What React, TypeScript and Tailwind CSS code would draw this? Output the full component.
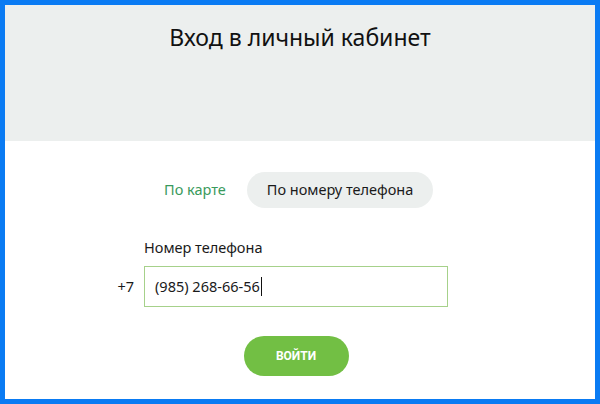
import React from 'react';

const font = { fontFamily: '"Noto Sans", "Open Sans", sans-serif' };

export default function App() {
  return (
    <div
      className="w-[600px] h-[404px] border-[5px] border-[#0a7bf3] bg-white flex flex-col text-[#1a1a1a]"
      style={font}
    >
      <div className="h-[136px] bg-[#ecefee] pt-[17px] flex justify-center">
        <h1 className="text-[23px] leading-[30px] font-normal text-[#111]">Вход в личный кабинет</h1>
      </div>

      <div className="flex-1 ml-[139px] w-[304px] flex flex-col pt-[31px]">
        <div className="flex items-center gap-[1px]">
          <button className="h-[36px] px-[20px] rounded-full text-[14.5px] text-[#3a9a5c]">По карте</button>
          <button className="h-[36px] px-[20px] rounded-full text-[14.5px] bg-[#ecefee] text-[#1a1a1a]">
            По номеру телефона
          </button>
        </div>

        <label className="mt-[29px] mb-[9px] text-[14.5px] leading-[20px] text-[#1a1a1a]">Номер телефона</label>

        <div className="relative">
          <span className="absolute right-full mr-[10px] top-0 h-[41px] flex items-center text-[14.5px] text-[#1a1a1a]">
            +7
          </span>
          <div className="h-[41px] border border-[#a6d18a] flex items-center pl-[10px] text-[14.5px] text-[#1a1a1a]">
            (985) 268-66-56
            <span className="inline-block w-[1px] h-[19px] bg-[#111] ml-[1px]" />
          </div>
        </div>

        <div className="mt-[29px] flex justify-center">
          <button
            className="w-[105px] h-[40px] rounded-full bg-[#72bf44] text-white text-[12px] font-bold uppercase"
            style={{ fontFamily: 'Roboto, "Noto Sans", sans-serif' }}
          >
            Войти
          </button>
        </div>
      </div>
    </div>
  );
}
